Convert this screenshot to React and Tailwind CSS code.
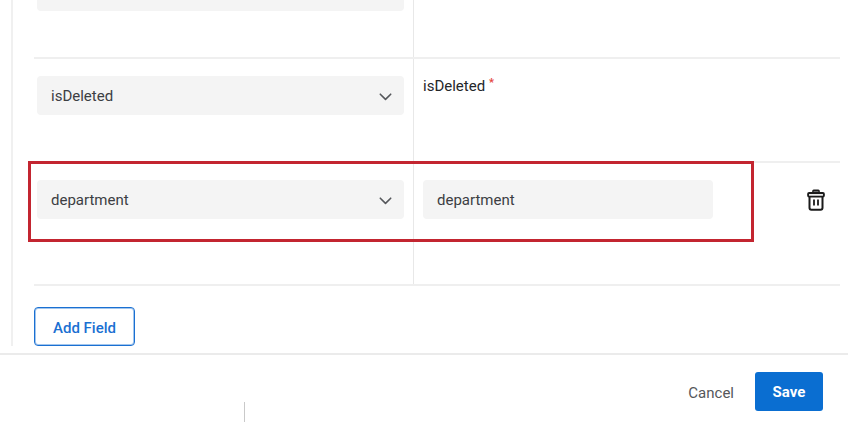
// App.jsx — Field mapping editor: mapping rows, "Add Field" and the footer actions.

import React from 'react';

function ChevronIcon() {
  return (
    <svg width="13" height="8" viewBox="0 0 13 8" fill="none" className="shrink-0">
      <path
        d="M1.3 1.2 6.5 6.4l5.2-5.2"
        stroke="#55575b"
        strokeWidth="1.6"
        strokeLinecap="round"
        strokeLinejoin="round"
      />
    </svg>
  );
}

function TrashIcon() {
  return (
    <svg width="18" height="22" viewBox="0 0 18 22" fill="none" stroke="#1b1b1b">
      <path d="M5.9 3.8V2c0-.5.3-.8.8-.8h4.6c.5 0 .8.300.8.8v1.800z" fill="#6b6c6e" strokeWidth="1.4" />
      <rect x="1.100" y="4" width="15.800" height="3.600" rx="1" fill="#ececec" strokeWidth="1.900" />
      <path d="M2.500 7.600v11.200c0 1.100.8 1.900 1.900 1.900h9.200c1.100 0 1.900-.8 1.900-1.900V7.600" strokeWidth="2" />
      <path d="M7 10.500v6M11 10.500v6" strokeWidth="1.800" />
    </svg>
  );
}

function SelectField({ value }) {
  return (
    <button
      type="button"
      className="flex h-[39px] w-[367px] items-center justify-between rounded-[4px] bg-[#f4f4f4] pr-3 pl-[14px] text-left text-[#3c3e43]"
    >
      <span>{value}</span>
      <span className="pt-[3px]">
        <ChevronIcon />
      </span>
    </button>
  );
}

export default function App() {
  return (
    <div className="flex h-[425px] w-[850px] flex-col overflow-hidden bg-white font-['Roboto',sans-serif] text-[15px] leading-5">
      {/* Mapping table */}
      <main className="h-[353px] pl-[11px]">
        <div className="h-[346px] w-[829px] border-l-2 border-[#f0f0f0] pl-[21px]">
          {/* Previous row, mostly scrolled out of view */}
          <div className="flex h-[59px] border-b-2 border-[#efefef]">
            <div className="w-[380px] border-r border-[#e8e8e8] pl-[3px]">
              <div className="h-[11px] w-[367px] rounded-b-[4px] bg-[#f4f4f4]" />
            </div>
          </div>

          <div className="flex h-[104px] border-b-2 border-[#efefef]">
            <div className="w-[380px] border-r border-[#e8e8e8] pt-[17px] pl-[3px]">
              <SelectField value="isDeleted" />
            </div>
            <div className="flex gap-1 pt-[17px] pl-[9px] text-[#242629]">
              <span>isDeleted</span>
              <span className="text-[11px] leading-[14px] font-bold text-[#e5453f]">*</span>
            </div>
          </div>

          <div className="relative flex h-[123px] border-b-2 border-[#efefef]">
            <div className="w-[380px] border-r border-[#e8e8e8] pt-[17px] pl-[3px]">
              <SelectField value="department" />
            </div>
            <div className="flex grow items-start justify-between pt-[17px] pr-[15px] pl-[9px]">
              <div className="flex h-[39px] w-[290px] items-center rounded-[4px] bg-[#f4f4f4] pl-[14px] text-[#3c3e43]">
                department
              </div>
              <button type="button" aria-label="Delete" className="pt-[9px]">
                <TrashIcon />
              </button>
            </div>
            {/* Highlight around the new mapping */}
            <div className="pointer-events-none absolute -top-[2px] -left-[6px] h-[81px] w-[726px] border-3 border-[#c32530]" />
          </div>

          <button
            type="button"
            className="mt-[21px] flex h-[39px] w-[101px] items-center justify-center rounded-[4px] border border-[#1a70d2] pt-0.5 font-medium text-[#1a70d2] ring-1 ring-[#1a70d2]/40 ring-inset"
          >
            Add Field
          </button>
        </div>
      </main>

      {/* Footer */}
      <footer className="flex h-[72px] w-[848px] justify-between border-t-2 border-[#ebebeb] pr-[25px] pl-[244px]">
        <div className="mt-[47px] h-5 w-px bg-[#c9c9c9]" />
        <div className="mt-[17px] flex h-[39px] items-center gap-[21px]">
          <button type="button" className="pt-0.5 text-[#55575b]">Cancel</button>
          <button type="button" className="h-[39px] w-[68px] rounded-[3px] bg-[#0a6ed1] font-bold text-white">
            Save
          </button>
        </div>
      </footer>
    </div>
  );
}
